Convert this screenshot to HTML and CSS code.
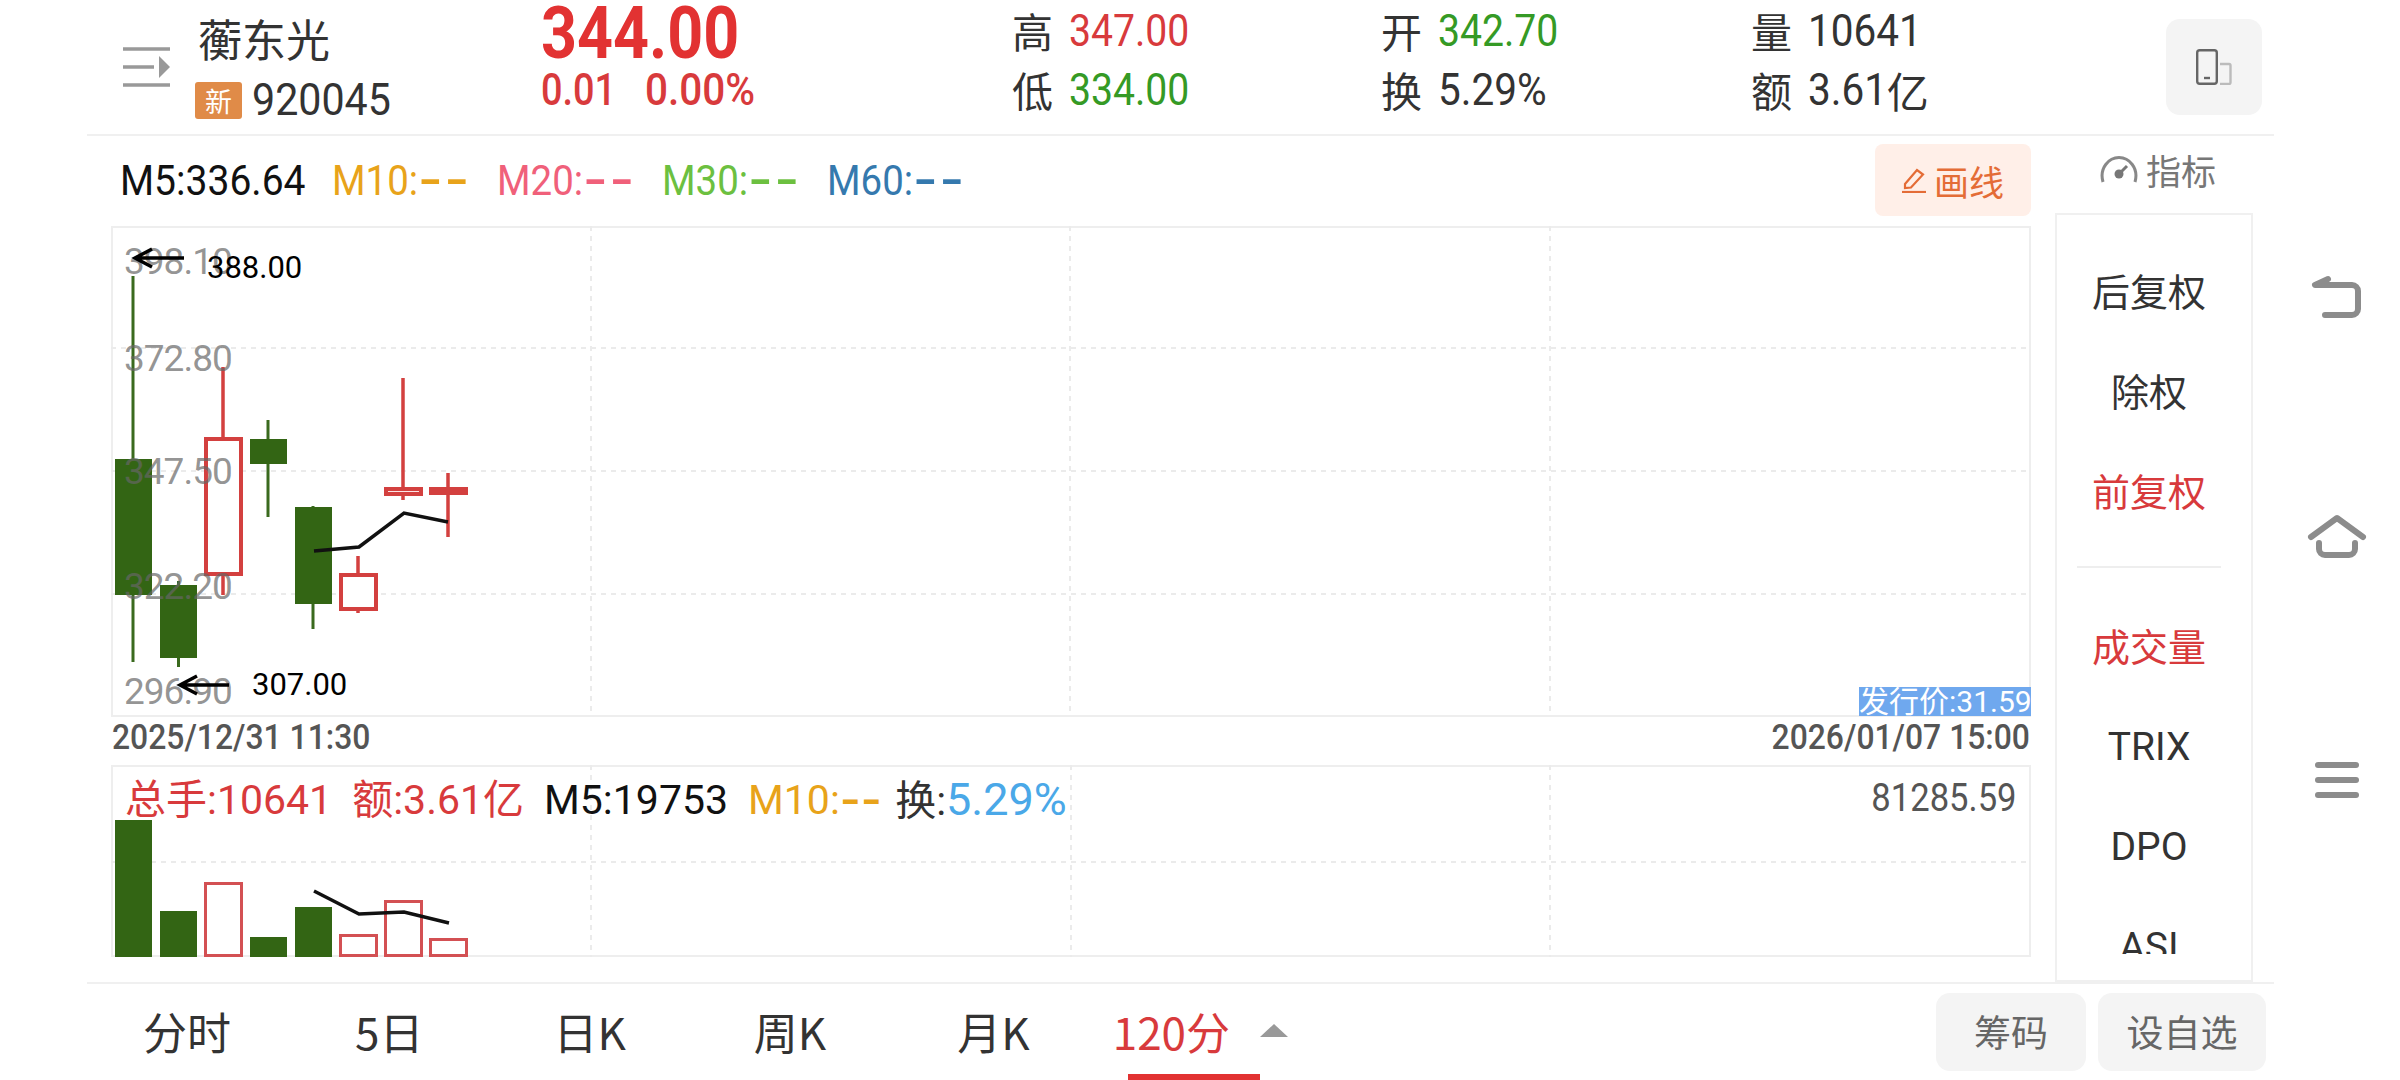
FILE: index.html

```html
<!DOCTYPE html>
<html lang="zh-CN">
<head>
  <meta charset="UTF-8">
  <title>蘅东光 920045</title>
  <link rel="stylesheet" href="styles.css">
</head>
<body>

<div class="page">
  <header class="quote">
    <svg class="drawer" viewBox="0 0 47 40" width="47" height="40">
      <path d="M0 2h47M0 20h31M0 38h47" stroke="#999" stroke-width="3.500" fill="none"/>
      <path d="M36 9l11 11-11 11z" fill="#999"/>
    </svg>
    <div class="stock">
      <div class="stock-name">蘅东光</div>
      <div class="stock-code"><span class="badge">新</span><span class="nr-wide">920045</span></div>
    </div>
    <div class="price">
      <div class="price-now">344.00</div>
      <div class="price-change"><span class="chg-a">0.01</span><span class="chg-b">0.00%</span></div>
    </div>
    <div class="stat">
      <div><span class="stat-name">高</span><span class="nr red">347.00</span></div>
      <div><span class="stat-name">低</span><span class="nr green">334.00</span></div>
    </div>
    <div class="stat">
      <div><span class="stat-name">开</span><span class="nr green">342.70</span></div>
      <div><span class="stat-name">换</span><span class="nr-mid">5.29%</span></div>
    </div>
    <div class="stat">
      <div><span class="stat-name">量</span><span class="nr-mid">10641</span></div>
      <div><span class="stat-name">额</span><span class="nr-mid yi-num">3.61</span><span class="yi">亿</span></div>
    </div>
    <div class="rotate-btn">
      <svg viewBox="0 0 36 36" width="36" height="36" fill="none">
        <rect x="1.200" y="1.200" width="19.600" height="33.600" rx="2.500" stroke="#666" stroke-width="2.400"/>
        <path d="M8 29h6" stroke="#666" stroke-width="2.400"/>
        <path d="M24 15h9a1.500 1.500 0 0 1 1.500 1.500v17a1.500 1.500 0 0 1-1.500 1.500h-9" stroke="#bbb" stroke-width="2.400"/>
      </svg>
    </div>
  </header>

  <div class="body">
    <div class="charts">
      <div class="legend">
        <div class="ma-list">
          <span class="ma-5">M5:336.64</span>
          <span class="ma-10">M10:<i>--</i></span>
          <span class="ma-20">M20:<i>--</i></span>
          <span class="ma-30">M30:<i>--</i></span>
          <span class="ma-60">M60:<i>--</i></span>
        </div>
        <div class="draw-btn">
          <svg viewBox="0 0 24 26" width="24" height="26" fill="none" stroke="#e46c36" stroke-width="2.200">
            <path d="M3 17L15 3l6 4.500-12 13-6 .5z"/>
            <path d="M0 25h24"/>
          </svg>
          <span>画线</span>
        </div>
      </div>

      <div class="k-box">
        <svg class="k-chart" viewBox="111 227 1920 490" width="1920" height="490">
          <path class="grid" d="M591 227v490M1070 227v490M1550 227v490M111 349h1920M111 472h1920M111 595h1920"/>

          <path class="wick-g" d="M133 277v386M178.500 582v86M268 421v97M313 507v123"/>
          <path class="wick-r" d="M223 368v70M223 577v19M358 557v17M358 612v2M403 379v109M403 497v4M448 474v64"/>
          <rect class="bar-g" x="115" y="460" width="37" height="136"/>
          <rect class="bar-g" x="160" y="586" width="37" height="73"/>
          <rect class="bar-g" x="250" y="440" width="37" height="25"/>
          <rect class="bar-g" x="295" y="508" width="37" height="97"/>
          <rect class="bar-r" x="206" y="440" width="35" height="135"/>
          <rect class="bar-r" x="341" y="576" width="35" height="34"/>
          <rect class="bar-r bar-thin" x="386" y="490" width="35" height="5"/>
          <rect class="bar-r bar-thin" x="431" y="490" width="35" height="4"/>

          <polyline class="ma-line" points="314,552 359,548 404,514 448,523"/>

          <text class="axis" x="124" y="275">398.10</text>
          <text class="axis" x="124" y="372">372.80</text>
          <text class="axis" x="124" y="485">347.50</text>
          <text class="axis" x="124" y="600">322.20</text>
          <text class="axis" x="124" y="705">296.90</text>

          <path class="arrow" d="M184 259h-49M152 250l-17 9 17 9"/>
          <text class="mark" x="207" y="279">388.00</text>
          <path class="arrow" d="M229 686h-49M197 677l-17 9 17 9"/>
          <text class="mark" x="252" y="696">307.00</text>
        </svg>
        <div class="issue-price">发行价:31.59</div>
      </div>

      <div class="dates">
        <span class="date-l">2025/12/31 11:30</span>
        <span class="date-r">2026/01/07 15:00</span>
      </div>

      <div class="vol-box">
        <svg class="vol-chart" viewBox="111 766 1920 192" width="1920" height="192">
          <path class="grid" d="M591 766v192M1071 766v192M1550 766v192M111 863h1920"/>
          <rect class="vol-g" x="115" y="821" width="37" height="137"/>
          <rect class="vol-g" x="160" y="912" width="37" height="46"/>
          <rect class="vol-g" x="250" y="938" width="37" height="20"/>
          <rect class="vol-g" x="295" y="908" width="37" height="50"/>
          <rect class="vol-r" x="205.500" y="884.500" width="36" height="72"/>
          <rect class="vol-r" x="340.500" y="936.500" width="36" height="20"/>
          <rect class="vol-r" x="385.500" y="902.500" width="36" height="54"/>
          <rect class="vol-r" x="430.500" y="940.500" width="36" height="16"/>
          <polyline class="ma-line" points="314,892 359,915 404,913 449,924"/>
        </svg>
        <div class="vol-legend">
          <span class="red">总手:10641</span>
          <span class="red">额:3.61亿</span>
          <span class="ma-5">M5:19753</span>
          <span class="ma-10">M10:<i>--</i></span>
          <span>换:<b class="blue">5.29%</b></span>
        </div>
        <div class="vol-max">81285.59</div>
      </div>
    </div>

    <aside class="side">
      <div class="side-title">
        <svg viewBox="0 0 38 28" width="38" height="28" fill="none">
          <path d="M3 26C-1 12 9 1.500 19 1.500S39 12 35 26" stroke="#888" stroke-width="3"/>
          <circle cx="19" cy="18" r="4.500" fill="#777"/>
          <path d="M19 18l8-8" stroke="#777" stroke-width="3"/>
        </svg>
        <span>指标</span>
      </div>
      <div class="side-box">
        <div class="side-list">
          <div class="side-item">后复权</div>
          <div class="side-item">除权</div>
          <div class="side-item red">前复权</div>
          <div class="side-rule"></div>
          <div class="side-item red">成交量</div>
          <div class="side-item latin">TRIX</div>
          <div class="side-item latin">DPO</div>
          <div class="side-item latin">ASI</div>
        </div>
      </div>
    </aside>
  </div>

  <footer class="tabs">
    <div class="tab tab-1">分时</div>
    <div class="tab tab-2">5日</div>
    <div class="tab tab-3">日K</div>
    <div class="tab tab-4">周K</div>
    <div class="tab tab-5">月K</div>
    <div class="tab tab-6 active">120分<i class="caret"></i></div>
    <div class="tab-btns">
      <div class="btn btn-chip">筹码</div>
      <div class="btn btn-add">设自选</div>
    </div>
  </footer>
</div>

<nav class="sys-nav">
  <svg class="nav-back" viewBox="0 0 56 44" width="56" height="44" fill="none" stroke="#8c8c8c" stroke-width="6" stroke-linecap="round" stroke-linejoin="round">
    <path d="M18 4L5 10h37a6 6 0 0 1 6 6v18a6 6 0 0 1-6 6H15"/>
  </svg>
  <svg class="nav-home" viewBox="0 0 60 48" width="60" height="48" fill="none" stroke="#8c8c8c" stroke-width="6" stroke-linecap="round" stroke-linejoin="round">
    <path d="M4 24L30 5l26 19"/>
    <path d="M12 30v6a6 6 0 0 0 6 6h24a6 6 0 0 0 6-6v-6"/>
  </svg>
  <svg class="nav-menu" viewBox="0 0 44 36" width="44" height="36" fill="#8c8c8c">
    <rect width="44" height="6" rx="3"/>
    <rect y="15" width="44" height="6" rx="3"/>
    <rect y="30" width="44" height="6" rx="3"/>
  </svg>
</nav>

</body>
</html>
```

FILE: styles.css

```css
* {
  box-sizing: border-box;
}
body {
  margin: 0;
  width: 2400px;
  height: 1080px;
  overflow: hidden;
  display: flex;
  background-color: #fff;
  color: #333;
  font-family: Roboto, "Noto Sans CJK SC", sans-serif;
}
i, b {
  font-style: normal;
  font-weight: normal;
}
.red {
  color: #d83a3c;
}
.green {
  color: #359a25;
}
.blue {
  color: #4aa8e8;
  font-size: 45px;
}

/* the screenshot's digits are narrower than Roboto */
.nr, .nr-mid, .nr-wide {
  display: inline-block;
  transform: scaleX(.87);
  transform-origin: left center;
}
.nr-mid {
  transform: scaleX(.9);
}
.nr-wide {
  transform: scaleX(.915);
}

.page {
  width: 2187px;
  margin-left: 87px;
  display: flex;
  flex-direction: column;
}

/* header */
.quote {
  height: 137px;
  padding-left: 36px;
  border-bottom: 2px solid #f0f0f0;
  display: grid;
  grid-template-columns: 73px 347px 469px 369px 370px 415px 96px;
  align-items: center;
}
.stock-name {
  font-family: "Noto Sans CJK SC", sans-serif;
  font-size: 44px;
  line-height: 48px;
  margin: 0 0 18px 2px;
}
.stock-code {
  display: flex;
  align-items: center;
  font-size: 45px;
  line-height: 40px;
  gap: 10px;
}
.badge {
  width: 47px;
  height: 37px;
  margin-left: -1px;
  border-radius: 3px;
  background-color: #e08b48;
  color: #fff;
  font-family: "Noto Sans CJK SC", sans-serif;
  font-size: 27px;
  line-height: 37px;
  text-align: center;
}
.price {
  margin: -25px 0 0 -2px;
  color: #e23232;
}
.price-now {
  font-size: 73px;
  font-weight: bold;
  line-height: 66px;
  margin-bottom: 4px;
  transform: scaleX(.86);
  transform-origin: left center;
}
.price-change {
  display: flex;
  font-size: 44px;
  font-weight: 500;
  line-height: 40px;
  color: #d83a3c;
}
.chg-a, .chg-b {
  display: inline-block;
  transform: scaleX(.86);
  transform-origin: left center;
}
.chg-a {
  width: 104px;
}
.chg-b {
  transform: scaleX(.92);
}
.stat {
  font-size: 45px;
  line-height: 59px;
  margin-top: -14px;
}
.stat > div {
  height: 59px;
  display: flex;
}
.stat-name {
  font-family: "Noto Sans CJK SC", sans-serif;
  font-size: 41px;
  margin-right: 16px;
}
.yi-num {
  margin-right: -9px;
}
.yi {
  font-family: "Noto Sans CJK SC", sans-serif;
  font-size: 42px;
}
.rotate-btn {
  width: 96px;
  height: 96px;
  border-radius: 14px;
  background-color: #f4f4f4;
  display: flex;
  align-items: center;
  justify-content: center;
}

/* charts */
.body {
  flex: 1;
  display: flex;
}
.charts {
  width: 1920px;
  margin-left: 24px;
}
.legend {
  height: 90px;
  display: flex;
  justify-content: space-between;
  padding-top: 8px;
}
.ma-list {
  display: flex;
  padding: 13px 0 0 9px;
  font-size: 42px;
  line-height: 48px;
}
.ma-list span {
  width: 165px;
  transform: scaleX(.915);
  transform-origin: left center;
}
.ma-list .ma-5 {
  width: 212px;
  transform: scaleX(.93);
}
.ma-5 {
  color: #111;
}
.ma-10 {
  color: #e8a31a;
}
.ma-20 {
  color: #f0607a;
}
.ma-30 {
  color: #6cc040;
}
.ma-60 {
  color: #3579ae;
}
.ma-list i, .vol-legend i {
  display: inline-block;
  font-weight: bold;
  letter-spacing: 1px;
  transform: scaleX(1.65);
  transform-origin: left center;
  margin-right: 16px;
}
.vol-legend i {
  letter-spacing: 0;
  transform: scaleX(1.3);
  margin-right: 3px;
}
.draw-btn {
  width: 156px;
  height: 72px;
  border-radius: 8px;
  background-color: #ffefe8;
  color: #e46c36;
  font-family: "Noto Sans CJK SC", sans-serif;
  font-size: 35px;
  display: flex;
  align-items: center;
  justify-content: center;
  gap: 8px;
}
.k-box {
  position: relative;
  height: 491px;
  border: 2px solid #eee;
}
.k-chart, .vol-chart {
  position: absolute;
  left: -2px;
  top: -2px;
}
.grid {
  fill: none;
  stroke: #ebebeb;
  stroke-width: 2;
  stroke-dasharray: 5 5;
}
.wick-g {
  stroke: #3a6a1e;
  stroke-width: 3;
  fill: none;
}
.wick-r {
  stroke: #d3403f;
  stroke-width: 3.500;
  fill: none;
}
.bar-g, .vol-g {
  fill: #336514;
}
.bar-r {
  fill: #fff;
  stroke: #d3403f;
  stroke-width: 4;
}
.bar-thin {
  fill: #fde4e4;
}
.vol-r {
  fill: #fff;
  stroke: #d35053;
  stroke-width: 3;
}
.ma-line {
  fill: none;
  stroke: #111;
  stroke-width: 3.500;
}
.axis {
  fill: #666;
  fill-opacity: .7;
  font-size: 37px;
  letter-spacing: -1px;
}
.mark {
  fill: #000;
  font-size: 31px;
}
.arrow {
  fill: none;
  stroke: #000;
  stroke-width: 3.500;
}
.issue-price {
  position: absolute;
  right: -2px;
  bottom: -1px;
  height: 29px;
  width: 172px;
  background-color: #6fa8ee;
  color: #fff;
  font-size: 30px;
  line-height: 29px;
  text-align: right;
  white-space: nowrap;
}
.dates {
  height: 48px;
  padding: 0 1px 8px;
  display: flex;
  justify-content: space-between;
  align-items: center;
  font-size: 35px;
  font-weight: 500;
  color: #555;
}
.date-l, .date-r {
  display: inline-block;
  transform: scaleX(.91);
  transform-origin: left center;
}
.date-r {
  transform-origin: right center;
}
.vol-box {
  position: relative;
  height: 192px;
  border: 2px solid #eee;
}
.vol-legend {
  position: absolute;
  left: 12px;
  top: 10px;
  display: flex;
  gap: 20px;
  font-size: 41px;
  line-height: 46px;
  white-space: nowrap;
}
.vol-max {
  position: absolute;
  right: 12px;
  top: 9px;
  font-size: 38px;
  line-height: 44px;
  color: #555;
  transform: scaleX(.91);
  transform-origin: right center;
}

/* right side */
.side {
  width: 198px;
  margin-left: 24px;
  font-family: "Noto Sans CJK SC", sans-serif;
}
.side-title {
  height: 77px;
  display: flex;
  align-items: center;
  justify-content: center;
  gap: 8px;
  padding: 0 0 10px 8px;
  font-size: 35px;
  color: #777;
}
.side-box {
  height: 769px;
  border: 2px solid #f0f0f0;
  padding: 25px 10px 26px 0;
}
.side-list {
  height: 714px;
  overflow: hidden;
}
.side-item {
  height: 100px;
  line-height: 100px;
  text-align: center;
  font-size: 38px;
}
.latin {
  font-family: Roboto, sans-serif;
  font-size: 39px;
  line-height: 104px;
}
.side-rule {
  height: 2px;
  margin: 26px 20px 27px;
  background-color: #eee;
}

/* tabs */
.tabs {
  height: 98px;
  border-top: 2px solid #f0f0f0;
  display: flex;
  font-family: "Noto Sans CJK SC", sans-serif;
  font-size: 44px;
  line-height: 40px;
}
.tab {
  padding-top: 27px;
}
.tab-1 {
  margin-left: 56px;
}
.tab-2 {
  margin-left: 124px;
}
.tab-3 {
  margin-left: 130px;
}
.tab-4 {
  margin-left: 128px;
}
.tab-5 {
  margin-left: 131px;
}
.tab-6 {
  margin-left: 83px;
}
.active {
  color: #d83a3c;
  display: flex;
  height: 96px;
  position: relative;
}
.active::after {
  content: "";
  position: absolute;
  left: 15px;
  bottom: 0;
  width: 132px;
  height: 6px;
  background-color: #e23232;
}
.caret {
  width: 0;
  height: 0;
  margin: 13px 0 0 30px;
  border-left: 14px solid transparent;
  border-right: 14px solid transparent;
  border-bottom: 13px solid #999;
}
.tab-btns {
  margin-left: auto;
  margin-right: 8px;
  padding-top: 9px;
  display: flex;
  gap: 12px;
}
.btn {
  height: 78px;
  line-height: 76px;
  border-radius: 14px;
  background-color: #f4f4f4;
  color: #666;
  font-size: 37px;
  text-align: center;
}
.btn-chip {
  width: 150px;
}
.btn-add {
  width: 168px;
}

/* android nav */
.sys-nav {
  flex: 1;
  display: flex;
  flex-direction: column;
  align-items: flex-start;
  padding: 275px 0 0 36px;
}
.nav-home {
  margin: 194px 0 0 -3px;
}
.nav-menu {
  margin: 201px 0 0 5px;
}
```
